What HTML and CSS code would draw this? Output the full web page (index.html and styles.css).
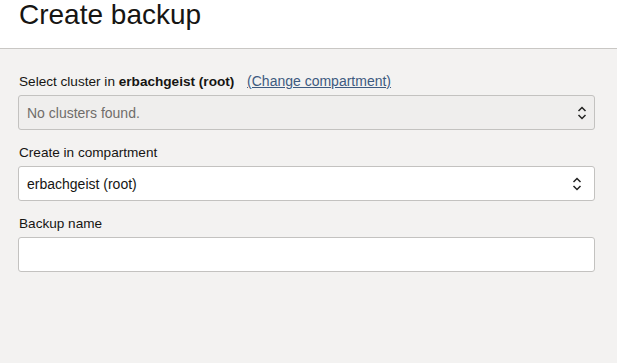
FILE: index.html
```html
<!DOCTYPE html>
<html>
<head>
<meta charset="utf-8">
<link rel="stylesheet" href="styles.css">
</head>
<body>
<header class="header">
  <h1 class="title">Create backup</h1>
</header>
<main class="form">
  <div class="field">
    <div class="label">Select cluster in <b>erbachgeist (root)</b> <a class="link" href="#">(Change compartment)</a></div>
    <div class="select disabled">
      <span class="value muted">No clusters found.</span>
      <svg class="chev" width="10" height="14" viewBox="0 0 10 14"><path d="M1.5 5 L5 1.5 L8.5 5 M1.5 9 L5 12.5 L8.5 9" fill="none" stroke="#222" stroke-width="1.5"/></svg>
    </div>
  </div>
  <div class="field">
    <div class="label">Create in compartment</div>
    <div class="select">
      <span class="value">erbachgeist (root)</span>
      <svg class="chev" width="10" height="14" viewBox="0 0 10 14"><path d="M1.5 5 L5 1.5 L8.5 5 M1.5 9 L5 12.5 L8.5 9" fill="none" stroke="#222" stroke-width="1.5"/></svg>
    </div>
  </div>
  <div class="field">
    <div class="label">Backup name</div>
    <div class="select input"></div>
  </div>
</main>
</body>
</html>
```

FILE: styles.css
```css
html, body {
  margin: 0;
  padding: 0;
  height: 100%;
}
body {
  background: #f3f2f1;
  font-family: "Liberation Sans", Arial, sans-serif;
  color: #161513;
}
.header {
  background: #ffffff;
  height: 48px;
  border-bottom: 1px solid #c9c7c4;
  box-sizing: content-box;
}
.title {
  margin: 0;
  padding: 0 0 0 19px;
  font-size: 28px;
  font-weight: normal;
  line-height: 30px;
  color: #161513;
}
.form {
  padding: 22px 22px 0 18px;
  display: flex;
  flex-direction: column;
  gap: 13px;
}
.field {
  display: flex;
  flex-direction: column;
  gap: 3px;
}
.label {
  font-size: 13.6px;
  line-height: 20px;
  padding-left: 1px;
}
.label b {
  font-weight: bold;
}
.link {
  margin-left: 9px;
  font-size: 14px;
  color: #3d5a80;
  text-decoration: underline;
}
.select {
  height: 33px;
  background: #ffffff;
  border: 1px solid #c3c2c0;
  border-radius: 3px;
  display: flex;
  align-items: center;
  justify-content: space-between;
  padding: 0 12px 0 8px;
  font-size: 14px;
}
.select.disabled {
  background: #efeeed;
  padding-right: 7px;
}
.value {
  color: #161513;
}
.muted {
  color: #6f6d6a;
}
.chev {
  display: block;
}
```
